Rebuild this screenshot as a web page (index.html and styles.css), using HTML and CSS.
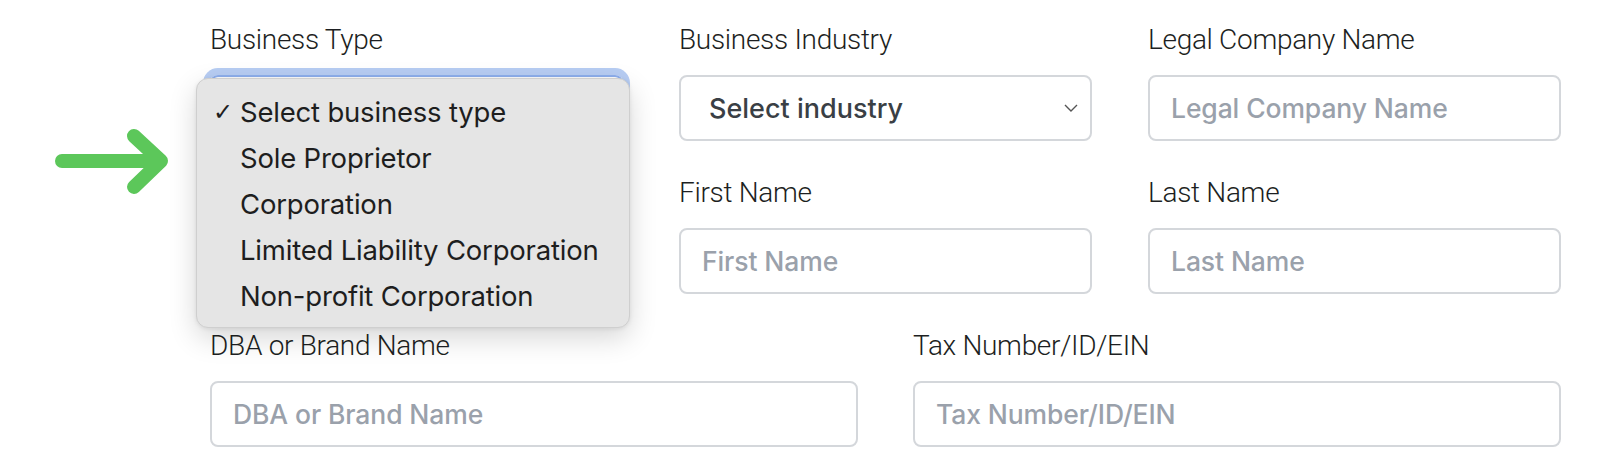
FILE: index.html
```html
<!DOCTYPE html>
<html lang="en">
<head>
    <meta charset="UTF-8">
    <meta name="viewport" content="width=device-width, initial-scale=1.0">
    <title>Business details</title>
    <link rel="stylesheet" href="styles.css">
</head>
<body>
    <!-- arrow drawn over the page to point at the open menu -->
    <svg class="pointer" width="130" height="80" viewBox="0 0 130 80">
        <path d="M12 36 H110 M84 11 L111 36 L84 62" fill="none" stroke="#5cc75a" stroke-width="14" stroke-linecap="round" stroke-linejoin="round"/>
    </svg>

    <form id="business">
        <div class="row three">
            <div class="field">
                <label>Business Type</label>
                <div class="control select focused"></div>
                <ul class="menu">
                    <li class="checked"><span class="tick">✓</span>Select business type</li>
                    <li>Sole Proprietor</li>
                    <li>Corporation</li>
                    <li>Limited Liability Corporation</li>
                    <li>Non-profit Corporation</li>
                </ul>
            </div>
            <div class="field">
                <label>Business Industry</label>
                <div class="control select">
                    <span class="value">Select industry</span>
                    <svg class="chevron" width="14" height="8" viewBox="0 0 14 8"><path d="M1 1 L7 7 L13 1" fill="none" stroke="#555" stroke-width="1.4"/></svg>
                </div>
            </div>
            <div class="field">
                <label>Legal Company Name</label>
                <div class="control"><span class="hint">Legal Company Name</span></div>
            </div>
        </div>

        <div class="row three">
            <div class="field"></div>
            <div class="field">
                <label>First Name</label>
                <div class="control"><span class="hint">First Name</span></div>
            </div>
            <div class="field">
                <label>Last Name</label>
                <div class="control"><span class="hint">Last Name</span></div>
            </div>
        </div>

        <div class="row two">
            <div class="field">
                <label>DBA or Brand Name</label>
                <div class="control"><span class="hint">DBA or Brand Name</span></div>
            </div>
            <div class="field">
                <label>Tax Number/ID/EIN</label>
                <div class="control"><span class="hint">Tax Number/ID/EIN</span></div>
            </div>
        </div>
    </form>
</body>
</html>
```

FILE: styles.css
```css
body {
    margin: 0;
    padding: 0;
    background-color: #ffffff;
    font-family: "Liberation Sans", Arial, sans-serif;
}

#business {
    width: 1351px;
    padding: 23px 0 0 210px;
}

.row {
    display: grid;
    column-gap: 56px;
    margin-bottom: 35px;
}

.row.three {
    grid-template-columns: 413px 413px 413px;
}

.row.two {
    grid-template-columns: 648px 648px;
    column-gap: 55px;
}

.field {
    position: relative;
}

.field label {
    display: block;
    height: 34px;
    line-height: 34px;
    margin-bottom: 18px;
    font-family: Roboto, "Liberation Sans", sans-serif;
    font-weight: 300;
    font-size: 28px;
    color: #1d1f22;
    letter-spacing: -0.3px;
}

.control {
    box-sizing: border-box;
    height: 66px;
    border: 2px solid #d4d7db;
    border-radius: 8px;
    display: flex;
    align-items: center;
    padding-left: 21px;
    font-family: Inter, "Noto Sans", sans-serif;
    font-size: 26.5px;
}

.control .hint {
    color: #9aa1ab;
    font-weight: 500;
    letter-spacing: -0.1px;
}

.select {
    padding-left: 28px;
    padding-right: 12px;
    justify-content: space-between;
}

.select .value {
    color: #3a3f45;
    font-weight: 500;
    font-size: 27px;
}

.select.focused {
    box-shadow: 0 0 0 7px #b7cdf3;
    border-color: #8fb0ee;
}

/* native menu of the open select */
.menu {
    position: absolute;
    top: 55px;
    left: -14px;
    width: 434px;
    box-sizing: border-box;
    margin: 0;
    padding: 10px 0 8px 43px;
    list-style: none;
    background-color: #e5e5e5;
    border: 1px solid #cfcfcf;
    border-radius: 12px;
    box-shadow: 0 10px 28px rgba(0, 0, 0, 0.16), 0 1px 4px rgba(0, 0, 0, 0.08);
    z-index: 10;
}

.menu li {
    position: relative;
    height: 46px;
    line-height: 46px;
    font-family: Inter, "Noto Sans", sans-serif;
    font-size: 27.5px;
    color: #1e1e1e;
    letter-spacing: -0.2px;
}

.menu .tick {
    position: absolute;
    left: -27px;
    font-family: "DejaVu Sans", sans-serif;
    font-size: 24px;
}

.pointer {
    position: absolute;
    left: 50px;
    top: 125px;
}
```
